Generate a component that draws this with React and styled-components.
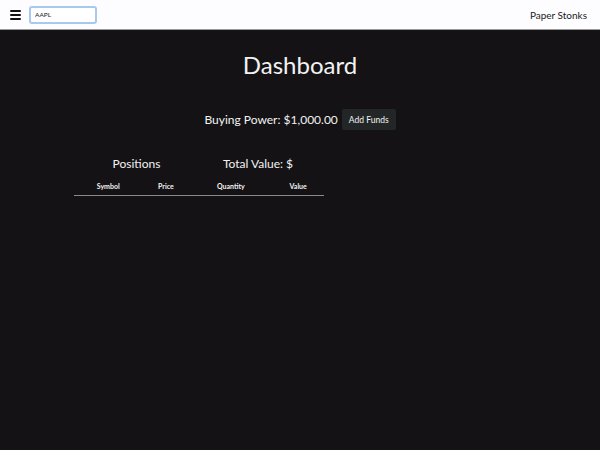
import React from "react";
import styled, { createGlobalStyle } from "styled-components";

const GlobalStyle = createGlobalStyle`
  html, body {
    margin: 0;
    padding: 0;
    background: #141215;
    font-family: Lato, "Open Sans", sans-serif;
  }
`;

const Page = styled.div`
  width: 600px;
  height: 450px;
  background: #141215;
  color: #f2f2f2;
  display: flex;
  flex-direction: column;
`;

const Navbar = styled.div`
  height: 29px;
  background: #fdfcff;
  border-bottom: 1px solid #9a9a9a;
  display: flex;
  align-items: center;
  justify-content: space-between;
  padding: 0 13px 0 10px;
`;

const NavLeft = styled.div`
  display: flex;
  align-items: center;
  gap: 8px;
`;

const Burger = styled.button`
  border: none;
  background: none;
  padding: 0;
  width: 11px;
  height: 10px;
  display: flex;
  flex-direction: column;
  justify-content: space-between;
  cursor: pointer;
`;

const BurgerLine = styled.span`
  display: block;
  height: 2px;
  background: #111;
  border-radius: 1px;
`;

const SearchInput = styled.input`
  width: 56px;
  height: 12px;
  padding: 1px 4px;
  border: 2px solid #a8c8f0;
  border-radius: 3px;
  font-family: Lato, sans-serif;
  font-size: 6.5px;
  color: #222;
  outline: none;
`;

const Brand = styled.span`
  font-size: 10px;
  color: #222;
`;

const Main = styled.div`
  display: flex;
  flex-direction: column;
  align-items: center;
`;

const Title = styled.h1`
  margin: 20px 0 0;
  font-size: 24px;
  font-weight: 400;
  line-height: 30px;
`;

const PowerRow = styled.div`
  margin-top: 29px;
  display: flex;
  align-items: center;
  gap: 4px;
  font-size: 12px;
`;

const AddButton = styled.button`
  height: 21px;
  padding: 0 7px;
  border: none;
  border-radius: 2px;
  background: #232627;
  color: #f2f2f2;
  font-family: Lato, sans-serif;
  font-size: 8.5px;
  cursor: pointer;
`;

const Positions = styled.div`
  align-self: flex-start;
  margin: 26px 0 0 74px;
  width: 250px;
`;

const Heads = styled.div`
  display: grid;
  grid-template-columns: 125px 118px;
  font-size: 12px;
  text-align: center;
  line-height: 16px;
`;

const Table = styled.table`
  width: 250px;
  margin-top: 10px;
  border-collapse: collapse;
`;

const Th = styled.th`
  font-size: 7px;
  font-weight: 700;
  padding: 0 0 5px;
  border-bottom: 1px solid #8a8a8a;
  text-align: center;
`;

export default function App() {
  return (
    <Page>
      <GlobalStyle />
      <Navbar>
        <NavLeft>
          <Burger aria-label="menu">
            <BurgerLine />
            <BurgerLine />
            <BurgerLine />
          </Burger>
          <SearchInput defaultValue="AAPL" />
        </NavLeft>
        <Brand>Paper Stonks</Brand>
      </Navbar>
      <Main>
        <Title>Dashboard</Title>
        <PowerRow>
          <span>Buying Power: $1,000.00</span>
          <AddButton>Add Funds</AddButton>
        </PowerRow>
        <Positions>
          <Heads>
            <span>Positions</span>
            <span>Total Value: $</span>
          </Heads>
          <Table>
            <thead>
              <tr>
                <Th>Symbol</Th>
                <Th>Price</Th>
                <Th>Quantity</Th>
                <Th>Value</Th>
              </tr>
            </thead>
          </Table>
        </Positions>
      </Main>
    </Page>
  );
}
